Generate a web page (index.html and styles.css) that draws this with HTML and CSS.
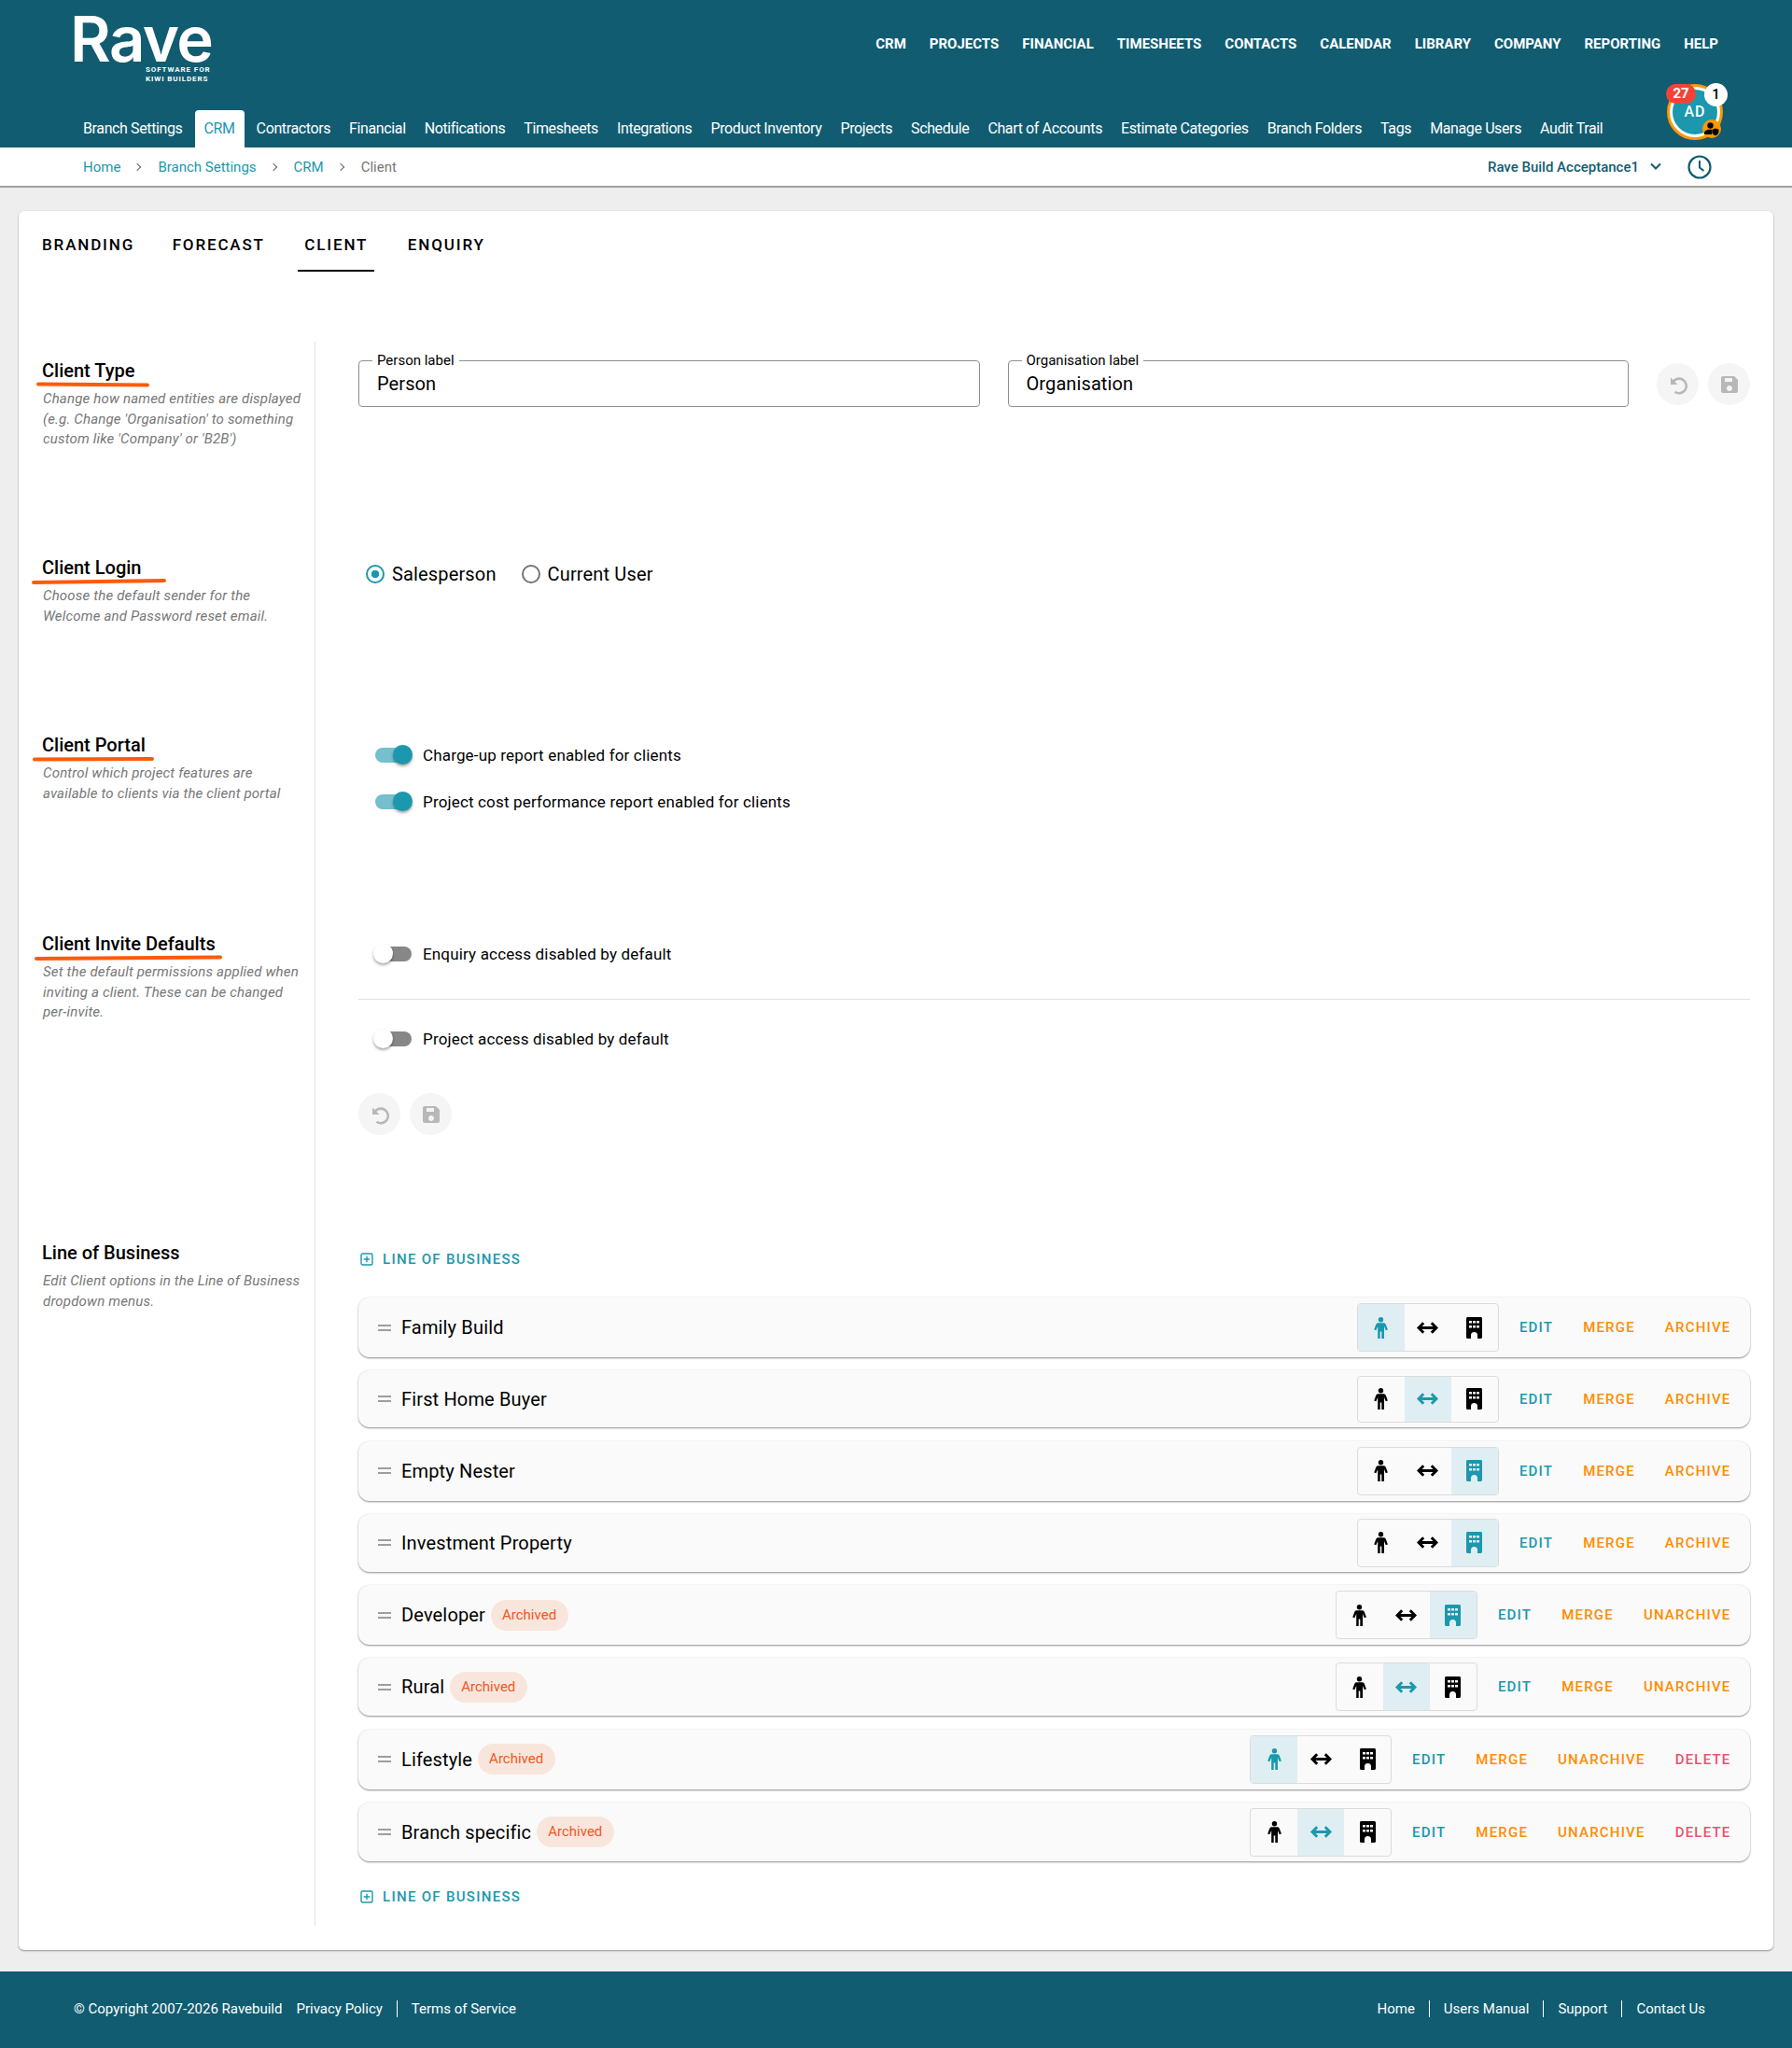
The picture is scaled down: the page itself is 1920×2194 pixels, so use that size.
FILE: index.html
```html
<!DOCTYPE html>
<html lang="en">
<head>
  <meta charset="UTF-8" />
  <meta name="viewport" content="width=device-width, initial-scale=1.0"/>
  <title>Client settings</title>
  <link rel="stylesheet" href="styles.css">
</head>
<body>
  <!-- shared icons -->
  <svg class="defs" width="0" height="0">
    <symbol id="i-man" viewBox="0 0 15 23">
      <circle cx="7.5" cy="2.7" r="2.7"/>
      <path d="M4.8 6.2h5.4c1.300 0 2.300.6 2.700 1.800l2 5.400-2.100.9-1.800-4.300v13H8.300v-7.500H6.700V23H4.200V10L2.300 14.300.2 13.400l2-5.400c.4-1.200 1.400-1.800 2.600-1.800z"/>
    </symbol>
    <symbol id="i-arrows" viewBox="0 0 23 13">
      <path d="M2 6.500h19M7.200 1.300 2 6.500l5.200 5.200M15.800 1.300 21 6.500l-5.200 5.200" fill="none" stroke="currentColor" stroke-width="3"/>
    </symbol>
    <symbol id="i-building" viewBox="0 0 17 23">
      <path fill-rule="evenodd" d="M1.500 0h14c.8 0 1.500.7 1.500 1.500v20c0 .8-.7 1.500-1.500 1.500H12v-3.500a3.500 3.500 0 0 0-7 0V23H1.500C.7 23 0 22.300 0 21.500v-20C0 .7.7 0 1.500 0zM3 4v2.600h3V4zm4 0v2.600h3V4zm4 0v2.600h3V4zM3 9v2.600h3V9zm4 0v2.600h3V9zm4 0v2.600h3V9z"/>
    </symbol>
    <symbol id="i-replay" viewBox="0 0 24 24">
      <path d="M4 4.500v7.500h7.500z"/>
      <path d="M6.300 9.500A7.800 7.800 0 1 1 8.500 19.800" fill="none" stroke="currentColor" stroke-width="2.600"/>
    </symbol>
    <symbol id="i-save" viewBox="0 0 24 24">
      <path d="M17 3H5c-1.110 0-2 .9-2 2v14c0 1.100.89 2 2 2h14c1.100 0 2-.9 2-2V7l-4-4zm-5 16c-1.660 0-3-1.340-3-3s1.340-3 3-3 3 1.340 3 3-1.340 3-3 3zm3-10H7V5h8v4z"/>
    </symbol>
    <symbol id="i-add" viewBox="0 0 14 14">
      <rect x="1" y="1" width="12" height="12" rx="1.500" fill="none" stroke="currentColor" stroke-width="1.400"/>
      <path d="M6.300 3.700h1.400v2.600h2.600v1.400H7.700v2.600H6.300V7.700H3.700V6.300h2.600z"/>
    </symbol>
  </svg>

  <header class="header">
    <div class="header-top">
      <div class="logo">
        <div class="logo-name">Rave</div>
        <div class="logo-sub">SOFTWARE FOR<br>KIWI BUILDERS</div>
      </div>
      <nav class="main-nav">
        <a>CRM</a><a>PROJECTS</a><a>FINANCIAL</a><a>TIMESHEETS</a><a>CONTACTS</a><a>CALENDAR</a><a>LIBRARY</a><a>COMPANY</a><a>REPORTING</a><a>HELP</a>
      </nav>
    </div>
    <nav class="sub-nav">
      <a>Branch Settings</a>
      <a class="active">CRM</a>
      <a>Contractors</a>
      <a>Financial</a>
      <a>Notifications</a>
      <a>Timesheets</a>
      <a>Integrations</a>
      <a>Product Inventory</a>
      <a>Projects</a>
      <a>Schedule</a>
      <a>Chart of Accounts</a>
      <a>Estimate Categories</a>
      <a>Branch Folders</a>
      <a>Tags</a>
      <a>Manage Users</a>
      <a>Audit Trail</a>
    </nav>
    <div class="avatar">
      <div class="avatar-inner">AD</div>
      <span class="badge-red">27</span>
      <span class="badge-white">1</span>
      <span class="badge-role">
        <svg width="16" height="16" viewBox="0 0 16 16"><circle cx="6.500" cy="4.500" r="3.200"/><path d="M0 14v-1.500c0-2.300 3-3.700 6.500-3.700.6 0 1.200 0 1.700.1V14z"/><path d="M12 7.500l3.500 1.300v2.400c0 2-1.500 3.500-3.500 4-2-.5-3.500-2-3.500-4V8.800z"/></svg>
      </span>
    </div>
  </header>

  <div class="crumbs">
    <div class="crumb-list">
      <a>Home</a><span class="sep"></span>
      <a>Branch Settings</a><span class="sep"></span>
      <a>CRM</a><span class="sep"></span>
      <span class="crumb-now">Client</span>
    </div>
    <div class="crumb-right">
      <span class="branch">Rave Build Acceptance1</span>
      <svg class="branch-arrow" width="14" height="9" viewBox="0 0 14 9"><path d="M2 1.500l5 5 5-5" fill="none" stroke="#115c70" stroke-width="2"/></svg>
      <svg class="clock" width="26" height="26" viewBox="0 0 26 26"><circle cx="13" cy="13" r="11.500" fill="none" stroke="#115c70" stroke-width="2.200"/><path d="M13 6v7.500l4.500 3.500" fill="none" stroke="#115c70" stroke-width="2"/></svg>
    </div>
  </div>

  <main class="page">
    <div class="card">
      <div class="tabs">
        <a>BRANDING</a>
        <a>FORECAST</a>
        <a class="active">CLIENT</a>
        <a>ENQUIRY</a>
      </div>

      <section class="sec sec-type">
        <div class="sec-side">
          <h3 class="sec-title">Client Type
            <svg class="mark" style="left:-6px;width:121px" viewBox="0 0 121 6" preserveAspectRatio="none"><path d="M2 2.500 L119 3.500" stroke="#ff5a0a" stroke-width="4" stroke-linecap="round"/></svg>
          </h3>
          <p class="sec-desc">Change how named entities are displayed<br>(e.g. Change 'Organisation' to something<br>custom like 'Company' or 'B2B')</p>
        </div>
        <div class="sec-body type-row">
          <fieldset class="field"><legend>Person label</legend><span>Person</span></fieldset>
          <fieldset class="field"><legend>Organisation label</legend><span>Organisation</span></fieldset>
          <div class="round-btns">
            <button class="round"><svg width="24" height="24"><use href="#i-replay"/></svg></button>
            <button class="round"><svg width="24" height="24"><use href="#i-save"/></svg></button>
          </div>
        </div>
      </section>

      <section class="sec sec-login">
        <div class="sec-side">
          <h3 class="sec-title">Client Login
            <svg class="mark" style="left:-11px;width:144px" viewBox="0 0 144 6" preserveAspectRatio="none"><path d="M2 4 L142 2" stroke="#ff5a0a" stroke-width="4" stroke-linecap="round"/></svg>
          </h3>
          <p class="sec-desc">Choose the default sender for the<br>Welcome and Password reset email.</p>
        </div>
        <div class="sec-body radios">
          <label class="radio on"><i></i>Salesperson</label>
          <label class="radio"><i></i>Current User</label>
        </div>
      </section>

      <section class="sec sec-portal">
        <div class="sec-side">
          <h3 class="sec-title">Client Portal
            <svg class="mark" style="left:-10px;width:130px" viewBox="0 0 130 6" preserveAspectRatio="none"><path d="M2 3.500 L128 3" stroke="#ff5a0a" stroke-width="4" stroke-linecap="round"/></svg>
          </h3>
          <p class="sec-desc">Control which project features are<br>available to clients via the client portal</p>
        </div>
        <div class="sec-body switches">
          <div class="switch-row"><span class="switch on"><b></b></span>Charge-up report enabled for clients</div>
          <div class="switch-row"><span class="switch on"><b></b></span>Project cost performance report enabled for clients</div>
        </div>
      </section>

      <section class="sec sec-invite">
        <div class="sec-side">
          <h3 class="sec-title">Client Invite Defaults
            <svg class="mark" style="left:-8px;width:201px" viewBox="0 0 201 6" preserveAspectRatio="none"><path d="M2 4 L199 2.500" stroke="#ff5a0a" stroke-width="4" stroke-linecap="round"/></svg>
          </h3>
          <p class="sec-desc">Set the default permissions applied when<br>inviting a client. These can be changed<br>per-invite.</p>
        </div>
        <div class="sec-body">
          <div class="switch-row"><span class="switch"><b></b></span>Enquiry access disabled by default</div>
          <hr class="rule">
          <div class="switch-row"><span class="switch"><b></b></span>Project access disabled by default</div>
          <div class="round-btns invite-btns">
            <button class="round"><svg width="24" height="24"><use href="#i-replay"/></svg></button>
            <button class="round"><svg width="24" height="24"><use href="#i-save"/></svg></button>
          </div>
        </div>
      </section>

      <section class="sec sec-lob">
        <div class="sec-side">
          <h3 class="sec-title">Line of Business</h3>
          <p class="sec-desc">Edit Client options in the Line of Business<br>dropdown menus.</p>
        </div>
        <div class="sec-body">
          <a class="add-link"><svg width="14" height="14"><use href="#i-add"/></svg>LINE OF BUSINESS</a>

          <div class="lob-list">
            <div class="lob">
              <span class="grip"></span><span class="lob-name">Family Build</span>
              <div class="seg"><span class="on"><svg width="15" height="23"><use href="#i-man"/></svg></span><span><svg width="23" height="13"><use href="#i-arrows"/></svg></span><span><svg width="17" height="23"><use href="#i-building"/></svg></span></div>
              <div class="acts"><a class="edit">EDIT</a><a class="warn">MERGE</a><a class="warn">ARCHIVE</a></div>
            </div>
            <div class="lob">
              <span class="grip"></span><span class="lob-name">First Home Buyer</span>
              <div class="seg"><span><svg width="15" height="23"><use href="#i-man"/></svg></span><span class="on"><svg width="23" height="13"><use href="#i-arrows"/></svg></span><span><svg width="17" height="23"><use href="#i-building"/></svg></span></div>
              <div class="acts"><a class="edit">EDIT</a><a class="warn">MERGE</a><a class="warn">ARCHIVE</a></div>
            </div>
            <div class="lob">
              <span class="grip"></span><span class="lob-name">Empty Nester</span>
              <div class="seg"><span><svg width="15" height="23"><use href="#i-man"/></svg></span><span><svg width="23" height="13"><use href="#i-arrows"/></svg></span><span class="on"><svg width="17" height="23"><use href="#i-building"/></svg></span></div>
              <div class="acts"><a class="edit">EDIT</a><a class="warn">MERGE</a><a class="warn">ARCHIVE</a></div>
            </div>
            <div class="lob">
              <span class="grip"></span><span class="lob-name">Investment Property</span>
              <div class="seg"><span><svg width="15" height="23"><use href="#i-man"/></svg></span><span><svg width="23" height="13"><use href="#i-arrows"/></svg></span><span class="on"><svg width="17" height="23"><use href="#i-building"/></svg></span></div>
              <div class="acts"><a class="edit">EDIT</a><a class="warn">MERGE</a><a class="warn">ARCHIVE</a></div>
            </div>
            <div class="lob">
              <span class="grip"></span><span class="lob-name">Developer</span><span class="chip">Archived</span>
              <div class="seg"><span><svg width="15" height="23"><use href="#i-man"/></svg></span><span><svg width="23" height="13"><use href="#i-arrows"/></svg></span><span class="on"><svg width="17" height="23"><use href="#i-building"/></svg></span></div>
              <div class="acts"><a class="edit">EDIT</a><a class="warn">MERGE</a><a class="warn">UNARCHIVE</a></div>
            </div>
            <div class="lob">
              <span class="grip"></span><span class="lob-name">Rural</span><span class="chip">Archived</span>
              <div class="seg"><span><svg width="15" height="23"><use href="#i-man"/></svg></span><span class="on"><svg width="23" height="13"><use href="#i-arrows"/></svg></span><span><svg width="17" height="23"><use href="#i-building"/></svg></span></div>
              <div class="acts"><a class="edit">EDIT</a><a class="warn">MERGE</a><a class="warn">UNARCHIVE</a></div>
            </div>
            <div class="lob">
              <span class="grip"></span><span class="lob-name">Lifestyle</span><span class="chip">Archived</span>
              <div class="seg"><span class="on"><svg width="15" height="23"><use href="#i-man"/></svg></span><span><svg width="23" height="13"><use href="#i-arrows"/></svg></span><span><svg width="17" height="23"><use href="#i-building"/></svg></span></div>
              <div class="acts"><a class="edit">EDIT</a><a class="warn">MERGE</a><a class="warn">UNARCHIVE</a><a class="danger">DELETE</a></div>
            </div>
            <div class="lob">
              <span class="grip"></span><span class="lob-name">Branch specific</span><span class="chip">Archived</span>
              <div class="seg"><span><svg width="15" height="23"><use href="#i-man"/></svg></span><span class="on"><svg width="23" height="13"><use href="#i-arrows"/></svg></span><span><svg width="17" height="23"><use href="#i-building"/></svg></span></div>
              <div class="acts"><a class="edit">EDIT</a><a class="warn">MERGE</a><a class="warn">UNARCHIVE</a><a class="danger">DELETE</a></div>
            </div>
          </div>

          <a class="add-link add-bottom"><svg width="14" height="14"><use href="#i-add"/></svg>LINE OF BUSINESS</a>
        </div>
      </section>
    </div>
  </main>

  <footer class="footer">
    <div class="foot-left">
      <span class="copy">© Copyright 2007-2026 Ravebuild</span>
      <a>Privacy Policy</a><a>Terms of Service</a>
    </div>
    <div class="foot-right">
      <a>Home</a><a>Users Manual</a><a>Support</a><a>Contact Us</a>
    </div>
  </footer>
</body>
</html>
```

FILE: styles.css
```css
* {
  box-sizing: border-box;
}
body {
  margin: 0;
  font-family: Roboto, "Liberation Sans", sans-serif;
  background: #eeeeee;
  color: #000;
}
a {
  cursor: pointer;
}
.defs {
  position: absolute;
}
svg {
  fill: currentColor;
  display: block;
}

/* header */
.header {
  position: relative;
  height: 158px;
  background: #115c70;
  color: #fff;
}
.header-top {
  display: flex;
  justify-content: space-between;
  height: 118px;
  padding: 0 79px;
}
.logo {
  padding-top: 13px;
}
.logo-name {
  margin-left: -4px;
  font-family: Inter, sans-serif;
  font-weight: 600;
  font-size: 67px;
  line-height: 57px;
  letter-spacing: -1.500px;
}
.logo-sub {
  padding-left: 77px;
  font-size: 8px;
  line-height: 10px;
  font-weight: 700;
  letter-spacing: .9px;
}
.main-nav {
  display: flex;
  gap: 25px;
  margin-top: 36px;
  height: 22px;
  line-height: 22px;
  font-size: 15px;
  font-weight: 700;
}
.sub-nav {
  display: flex;
  height: 40px;
  padding-left: 79px;
  font-size: 16px;
  letter-spacing: -.38px;
  line-height: 39px;
}
.sub-nav a {
  padding: 0 10px;
}
.sub-nav a.active {
  margin: 0 3px;
  background: #fff;
  color: #1b98ad;
  border-radius: 4px 4px 0 0;
}
.avatar {
  position: absolute;
  left: 1786px;
  top: 90px;
  width: 60px;
  height: 60px;
  border-radius: 50%;
  border: 3px solid #ff9800;
  background: #fff;
  padding: 3px;
}
.avatar-inner {
  height: 100%;
  border-radius: 50%;
  background: #1b98ad;
  text-align: center;
  font-size: 16px;
  font-weight: 500;
  letter-spacing: 1px;
  line-height: 48px;
}
.badge-red {
  position: absolute;
  left: -4px;
  top: -3px;
  width: 32px;
  height: 21px;
  border-radius: 11px;
  background: #f44336;
  text-align: center;
  font-size: 15px;
  font-weight: 700;
  line-height: 21px;
}
.badge-white {
  position: absolute;
  left: 37px;
  top: -4px;
  width: 25px;
  height: 25px;
  border-radius: 50%;
  background: #fff;
  color: #000;
  text-align: center;
  font-size: 15px;
  font-weight: 500;
  line-height: 25px;
}
.badge-role {
  position: absolute;
  left: 35px;
  top: 35px;
  width: 20px;
  height: 20px;
  border-radius: 50%;
  background: #ff9800;
  color: #000;
  padding: 2px;
}

/* breadcrumb bar */
.crumbs {
  display: flex;
  justify-content: space-between;
  align-items: center;
  height: 43px;
  padding: 0 86px 0 89px;
  background: #fff;
  border-bottom: 2px solid #a0a0a0;
  font-size: 15px;
}
.crumb-list {
  display: flex;
  align-items: center;
  color: #1b98ad;
}
.sep {
  width: 6px;
  height: 6px;
  margin: 0 19px 0 15px;
  border-top: 1px solid #666;
  border-right: 1px solid #666;
  transform: rotate(45deg);
}
.crumb-now {
  color: #777;
}
.crumb-right {
  display: flex;
  align-items: center;
}
.branch {
  color: #115c70;
  font-weight: 500;
}
.branch-arrow {
  margin: 0 27px 0 11px;
}

/* card */
.page {
  padding: 25px 20px 23px;
}
.card {
  height: 1863px;
  background: #fff;
  border-radius: 6px;
  box-shadow: 0 1px 2px rgba(0, 0, 0, .4);
}
.tabs {
  display: flex;
  height: 140px;
  padding: 18px 0 0 18px;
  font-size: 17px;
  font-weight: 500;
  letter-spacing: 1.850px;
}
.tabs a {
  height: 47px;
  padding: 0 7px;
  margin-right: 28.500px;
  line-height: 36px;
}
.tabs a:first-child {
  margin-right: 26.500px;
}
.tabs a.active {
  border-bottom: 2px solid #000;
}

/* settings sections */
.sec {
  display: grid;
  grid-template-columns: 318px 1fr;
}
.sec-type { height: 211px; }
.sec-login { height: 190px; }
.sec-portal { height: 213px; }
.sec-invite { height: 331px; }
.sec-lob { height: 752px; }
.sec-side {
  padding: 19px 0 0 25px;
  border-right: 1px solid #e0e0e0;
}
.sec-title {
  position: relative;
  width: max-content;
  margin: 0;
  font-size: 20px;
  font-weight: 500;
  line-height: 24px;
}
.mark {
  position: absolute;
  top: 24px;
  height: 6px;
  overflow: visible;
}
.sec-desc {
  margin: 8px 0 0;
  padding-left: 1px;
  font-size: 15px;
  font-style: italic;
  letter-spacing: .18px;
  color: #777;
  line-height: 21.500px;
}
.sec-body {
  padding: 0 25px 0 46px;
}

/* client type */
.type-row {
  display: flex;
  align-items: flex-start;
  gap: 30px;
  padding-top: 13px;
}
.field {
  flex: 1;
  height: 57px;
  margin: 0;
  padding: 0 0 0 14px;
  border: 1px solid #8f8f8f;
  border-radius: 4px;
}
.field legend {
  padding: 0 5px;
  font-size: 15px;
  line-height: 14px;
}
.field span {
  display: block;
  padding-top: 4px;
  padding-left: 5px;
  font-size: 20px;
  letter-spacing: .1px;
  line-height: 28px;
}
.round-btns {
  display: flex;
  gap: 10px;
}
.type-row .round-btns {
  margin-top: 10px;
}
.round {
  display: flex;
  align-items: center;
  justify-content: center;
  width: 45px;
  height: 45px;
  padding: 0;
  border: none;
  border-radius: 50%;
  background: #f5f5f5;
  color: #b8b8b8;
}

/* radios */
.radios {
  display: flex;
  gap: 27px;
  padding-top: 26px;
  padding-left: 54px;
}
.radio {
  display: flex;
  align-items: center;
  gap: 8px;
  height: 24px;
  font-size: 20px;
  letter-spacing: .15px;
}
.radio i {
  width: 20px;
  height: 20px;
  border-radius: 50%;
  border: 2px solid #757575;
}
.radio.on i {
  border-color: #1b98ad;
  background: radial-gradient(circle, #1b98ad 0 4px, transparent 4.500px);
}

/* switches */
.switches {
  display: flex;
  flex-direction: column;
  gap: 26px;
  padding-top: 30px;
}
.sec-invite .sec-body {
  padding-top: 30px;
}
.switch-row {
  display: flex;
  align-items: center;
  height: 24px;
  padding-left: 16px;
  font-size: 17px;
  letter-spacing: .16px;
}
.switch {
  position: relative;
  flex: none;
  width: 39px;
  height: 16px;
  margin: 0 12px 0 2px;
  border-radius: 8px;
  background: #878787;
}
.switch b {
  position: absolute;
  top: -3px;
  left: -2px;
  width: 21px;
  height: 21px;
  border-radius: 50%;
  background: #fff;
  box-shadow: 0 2px 3px rgba(0, 0, 0, .35);
}
.switch.on {
  background: #76bfcd;
}
.switch.on b {
  left: 19px;
  background: #1b98ad;
}
.rule {
  height: 1px;
  margin: 36px 0 30px;
  border: none;
  background: #e0e0e0;
}
.invite-btns {
  margin-top: 46px;
}

/* line of business */
.sec-lob .sec-body {
  padding-top: 26px;
}
.add-link {
  display: flex;
  align-items: center;
  height: 24px;
  padding-left: 2px;
  gap: 10px;
  color: #1b98ad;
  font-size: 15px;
  font-weight: 500;
  letter-spacing: 1.300px;
}
.lob-list {
  display: flex;
  flex-direction: column;
  gap: 14.300px;
  margin-top: 29px;
}
.add-bottom {
  margin-top: 26px;
}
.lob {
  display: flex;
  align-items: center;
  height: 64px;
  padding: 0 4.500px 0 21px;
  background: #fafafa;
  border-radius: 12px;
  box-shadow: 0 1px 2px rgba(0, 0, 0, .45), 0 -1px 2px rgba(0, 0, 0, .03);
}
.lob:nth-child(even) {
  height: 62px;
}
.lob:nth-child(2) {
  height: 61px;
}
.lob:nth-child(2) .seg {
  height: 50px;
}
.lob:last-child {
  height: 63px;
}
.grip {
  width: 14px;
  height: 7px;
  margin-right: 11px;
  border-top: 2px solid #9e9e9e;
  border-bottom: 2px solid #9e9e9e;
}
.lob-name {
  font-size: 20px;
  letter-spacing: .15px;
}
.chip {
  margin-left: 5.500px;
  padding: 0 12.500px;
  height: 33px;
  line-height: 33px;
  border-radius: 17px;
  background: #f8e6dd;
  color: #f4561d;
  font-size: 15px;
}
.seg {
  display: flex;
  height: 52px;
  margin-left: auto;
  border: 1px solid #dcdcdc;
  border-radius: 4px;
  overflow: hidden;
}
.seg span {
  display: flex;
  align-items: center;
  justify-content: center;
  width: 50px;
}
.seg span.on {
  background: #dfeef2;
  color: #1b98ad;
}
.acts {
  display: flex;
  margin-left: 6px;
}
.acts a {
  padding: 0 16px;
  font-size: 15px;
  font-weight: 500;
  letter-spacing: 1.200px;
}
.edit {
  color: #1b98ad;
}
.warn {
  color: #ff8c00;
}
.danger {
  color: #f0506e;
}

/* footer */
.footer {
  display: flex;
  justify-content: space-between;
  align-items: center;
  height: 82px;
  padding: 0 93px 2px 79px;
  background: #115c70;
  color: #fff;
  font-size: 15px;
}
.foot-left,
.foot-right {
  display: flex;
  align-items: center;
}
.copy {
  margin-right: 15px;
}
.foot-left a,
.foot-right a {
  line-height: 18px;
}
.foot-left a + a,
.foot-right a + a {
  margin-left: 15px;
  padding-left: 15px;
  border-left: 1px solid #fff;
}
```
